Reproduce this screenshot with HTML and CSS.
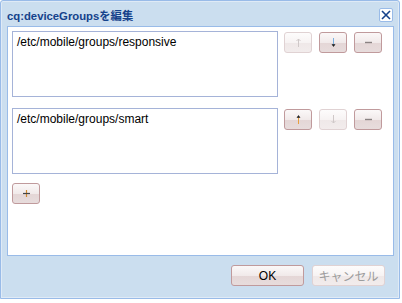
FILE: index.html
```
<!DOCTYPE html>
<html>
<head>
<meta charset="utf-8">
<link rel="stylesheet" href="styles.css">
</head>
<body>
<div class="window">
  <div class="header">
    <span class="title">cq:deviceGroupsを編集</span>
    <span class="close"><svg width="10" height="10" viewBox="0 0 10 10"><path d="M1 1 L9 9 M9 1 L1 9" stroke="#15428b" stroke-width="1.6"/></svg></span>
  </div>
  <div class="body">
    <div class="row">
      <div class="field">/etc/mobile/groups/responsive</div>
      <div class="tools">
        <span class="btn sm disabled"><svg width="5" height="9" viewBox="0 0 5 9"><path d="M2.5 9 V1" stroke="#cfc8c8" stroke-width="1"/><path d="M0.5 3 L2.5 1 L4.5 3" fill="none" stroke="#cfc8c8" stroke-width="1"/></svg></span>
        <span class="btn sm"><svg width="5" height="9" viewBox="0 0 5 9"><path d="M2.5 0 V7" stroke="#7ab0e0" stroke-width="1"/><path d="M1 6.5 L2.5 8.5 L4 6.5 Z" fill="#222" stroke="#222" stroke-width="0.6"/></svg></span>
        <span class="btn sm"><svg width="7" height="3" viewBox="0 0 7 3"><path d="M0 1.5 H7" stroke="#8a8282" stroke-width="1.4"/></svg></span>
      </div>
    </div>
    <div class="row">
      <div class="field">/etc/mobile/groups/smart</div>
      <div class="tools">
        <span class="btn sm"><svg width="5" height="9" viewBox="0 0 5 9"><path d="M2.5 9 V2" stroke="#e8a040" stroke-width="1"/><path d="M1 2.5 L2.5 0.5 L4 2.5 Z" fill="#222" stroke="#222" stroke-width="0.6"/></svg></span>
        <span class="btn sm disabled"><svg width="5" height="9" viewBox="0 0 5 9"><path d="M2.5 0 V8" stroke="#cfc8c8" stroke-width="1"/><path d="M0.5 6 L2.5 8 L4.5 6" fill="none" stroke="#cfc8c8" stroke-width="1"/></svg></span>
        <span class="btn sm"><svg width="7" height="3" viewBox="0 0 7 3"><path d="M0 1.5 H7" stroke="#8a8282" stroke-width="1.4"/></svg></span>
      </div>
    </div>
    <div class="addrow">
      <span class="btn sm"><svg width="7" height="7" viewBox="0 0 7 7"><path d="M3.5 0 V7" stroke="#d08a30" stroke-width="1.2"/><path d="M0 3.5 H7" stroke="#444" stroke-width="1.2"/></svg></span>
    </div>
  </div>
  <div class="footer">
    <span class="btn big">OK</span>
    <span class="btn big disabled">キャンセル</span>
  </div>
</div>
</body>
</html>
```
FILE: styles.css
```
html, body {
  margin: 0;
  padding: 0;
  background: #ffffff;
  font-family: "Liberation Sans", "Noto Sans CJK JP", sans-serif;
}
.window {
  box-sizing: border-box;
  width: 400px;
  height: 299px;
  border: 1px solid #99bbe8;
  border-radius: 3px 3px 0 0;
  background: #cbdeef;
  box-shadow: inset 0 0 0 1px #dfeaf6;
  display: flex;
  flex-direction: column;
}
.header {
  height: 25px;
  display: flex;
  align-items: center;
  justify-content: space-between;
  padding: 0 6px 0 6px;
}
.title {
  font-weight: bold;
  font-size: 11.3px;
  color: #15428b;
  margin-top: 2px;
}
.close {
  width: 14px;
  height: 14px;
  box-sizing: border-box;
  border: 1px solid #99bbe8;
  border-radius: 2px;
  background: #fff;
  display: flex;
  align-items: center;
  justify-content: center;
  margin-top: 3px;
}
.body {
  margin: 0 5px 0 6px;
  height: 230px;
  box-sizing: border-box;
  background: #fff;
  border: 1px solid #99bbe8;
  padding: 4px 4px;
}
.row {
  display: flex;
  gap: 6px;
  margin-bottom: 11px;
}
.field {
  box-sizing: border-box;
  width: 266px;
  height: 66px;
  border: 1px solid #a5b3d8;
  font-size: 12px;
  padding: 3px 4px;
  color: #000;
}
.tools {
  display: flex;
  gap: 7px;
  padding-top: 1px;
}
.btn {
  box-sizing: border-box;
  display: flex;
  align-items: center;
  justify-content: center;
  border: 1px solid #c09a9c;
  border-radius: 3px;
  background: linear-gradient(to bottom, #fbf8f8 0%, #f1eaea 50%, #e4d6d6 51%, #e7dcdc 100%);
}
.btn.disabled {
  border-color: #e0d2d3;
  background: linear-gradient(to bottom, #fdfcfc 0%, #f7f3f3 50%, #efe8e8 51%, #f2ecec 100%);
  color: #aaa0a0;
}
.sm {
  width: 28px;
  height: 21px;
}
.addrow {
  margin-top: -2px;
}
.footer {
  display: flex;
  justify-content: flex-end;
  gap: 8px;
  padding: 9px 14px 0 0;
}
.big {
  width: 73px;
  height: 21px;
  font-size: 12px;
  color: #000;
}
.big.disabled {
  color: #9c9c9c;
}
```
